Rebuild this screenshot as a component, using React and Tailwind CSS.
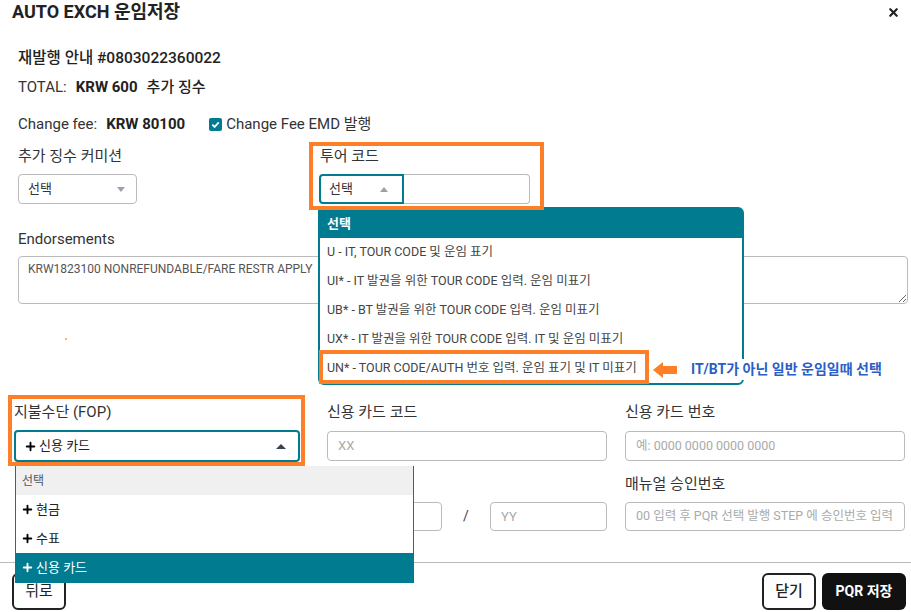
import React from "react";
import { X, Plus } from "lucide-react";

const tourOptions = [
  "U - IT, TOUR CODE 및 운임 표기",
  "UI* - IT 발권을 위한 TOUR CODE 입력. 운임 미표기",
  "UB* - BT 발권을 위한 TOUR CODE 입력. 운임 미표기",
  "UX* - IT 발권을 위한 TOUR CODE 입력. IT 및 운임 미표기",
  "UN* - TOUR CODE/AUTH 번호 입력. 운임 표기 및 IT 미표기",
];

const CaretDown = () => (
  <span className="w-0 h-0 border-x-[4px] border-x-transparent border-t-[5px] border-t-gray-400"></span>
);

const CaretUp = ({ dark }) => (
  <span
    className={
      dark
        ? "w-0 h-0 border-x-[5px] border-x-transparent border-b-[5px] border-b-gray-700"
        : "w-0 h-0 border-x-[4px] border-x-transparent border-b-[5px] border-b-gray-400"
    }
  ></span>
);

const PlusMark = ({ light }) => (
  <Plus size={13} strokeWidth={3.5} className={light ? "text-white" : "text-black"} />
);

export default function App() {
  return (
    <div className="relative w-[911px] h-[612px] overflow-hidden bg-white text-[#333] font-['Roboto','Noto_Sans_CJK_KR',sans-serif]">
      {/* Header */}
      <div className="h-[24px] flex items-center justify-between pl-3 pr-[11px]">
        <h1 className="text-[18px] font-bold text-[#222] leading-6">AUTO EXCH 운임저장</h1>
        <X size={13} strokeWidth={4} className="text-[#222]" />
      </div>

      <div className="pl-[18px] pr-[3px]">
        {/* Summary */}
        <div className="mt-[25px] h-[20px] flex items-center text-[15.5px] font-medium text-[#222]">
          재발행 안내 #0803022360022
        </div>
        <div className="mt-[8px] h-[20px] flex items-center text-[15px]">
          <span>TOTAL:</span>
          <span className="ml-[9px] font-bold text-[#222]">KRW 600</span>
          <span className="ml-[9px] font-medium text-[#222]">추가 징수</span>
        </div>
        <div className="mt-[17px] h-[20px] flex items-center text-[15px]">
          <span>Change fee:</span>
          <span className="ml-[9px] font-bold text-[#222]">KRW 80100</span>
          <span className="ml-[24px] w-[13px] h-[13px] rounded-[2px] bg-[#007b8f] flex items-center justify-center">
            <svg width="9" height="9" viewBox="0 0 10 10">
              <path d="M1.5 5.2 L4 7.6 L8.6 2.6" fill="none" stroke="white" strokeWidth="2" />
            </svg>
          </span>
          <span className="ml-[4px]">Change Fee EMD 발행</span>
        </div>

        {/* Commission / Tour code */}
        <div className="mt-[12px] flex">
          <div className="w-[301px]">
            <div className="h-[20px] flex items-center text-[15px]">추가 징수 커미션</div>
            <div className="mt-[8px] w-[119px] h-[30px] border border-[#bbb] rounded flex items-center justify-between pl-[9px] pr-[11px] text-[13px]">
              <span>선택</span>
              <CaretDown />
            </div>
          </div>
          <div className="relative">
            <div className="h-[20px] flex items-center text-[15px] pl-[1px]">투어 코드</div>
            <div className="mt-[8px] flex">
              <div className="w-[85px] h-[30px] border-2 border-[#007b8f] rounded-l flex items-center justify-between pl-[8px] pr-[14px] text-[13px]">
                <span>선택</span>
                <CaretUp />
              </div>
              <div className="w-[126px] h-[30px] border border-l-0 border-[#bbb] rounded-r"></div>
            </div>

            {/* annotation box */}
            <div className="absolute left-[-10px] top-[-4px] w-[235px] h-[68px] border-[4px] border-[#fd7f27] z-20 pointer-events-none"></div>

            {/* Tour code dropdown */}
            <div className="absolute left-[-1px] top-[61px] w-[426px] border-2 border-[#007b8f] rounded-b-md rounded-tr-md bg-white z-10">
              <div className="h-[29px] bg-[#007b8f] text-white text-[13px] font-bold flex items-center pl-[7px]">선택</div>
              {tourOptions.map((opt) => (
                <div key={opt} className="h-[29px] flex items-center pl-[7px] text-[12.5px] text-[#444]">
                  {opt}
                </div>
              ))}
              <div className="absolute left-[-1px] top-[141px] w-[330px] h-[34px] border-[4px] border-[#fd7f27] pointer-events-none"></div>
              <div className="absolute left-[332px] top-[150px] flex items-center">
                <svg width="26" height="18" viewBox="0 0 26 18">
                  <path d="M1 9 L11 1 L11 5 L25 5 L25 13 L11 13 L11 17 Z" fill="#fd7f27" />
                </svg>
                <span className="ml-[11px] bg-white px-[2px] text-[14px] font-bold text-[#2a5ec7] whitespace-nowrap">
                  IT/BT가 아닌 일반 운임일때 선택
                </span>
              </div>
            </div>
          </div>
        </div>

        {/* Endorsements */}
        <div className="mt-[25px] h-[20px] flex items-center text-[15px]">Endorsements</div>
        <textarea
          className="mt-[7px] block w-full h-[48px] border border-[#bbb] rounded px-[9px] py-[3px] text-[12px] text-[#555] outline-none"
          defaultValue="KRW1823100 NONREFUNDABLE/FARE RESTR APPLY"
        ></textarea>

        <div className="ml-[47px] mt-[34px] w-[2px] h-[2px] bg-[#fd7f27] opacity-60"></div>

        {/* Payment */}
        <div className="mt-[62px] -ml-[4px] flex">
          <div className="relative w-[286px]">
            <div className="h-[20px] flex items-center text-[15px]">지불수단 (FOP)</div>
            <div className="mt-[8px] h-[32px] border-2 border-[#007b8f] rounded flex items-center justify-between pl-[8px] pr-[12px] text-[13px] text-[#222]">
              <span className="flex items-center gap-[2px]">
                <PlusMark />
                신용 카드
              </span>
              <CaretUp dark />
            </div>
            <div className="absolute left-[-6px] top-[-7px] w-[297px] h-[71px] border-[4px] border-[#fd7f27] z-20 pointer-events-none"></div>

            {/* FOP dropdown */}
            <div className="absolute left-[1px] top-[64px] w-[399px] border border-[#007b8f] border-t-0 bg-white z-10 text-[13px]">
              <div className="h-[29px] bg-[#f0f0f0] text-[#555] text-[12px] flex items-center pl-[6px]">선택</div>
              <div className="h-[29px] flex items-center gap-[2px] pl-[5px] text-[#222]">
                <PlusMark />
                현금
              </div>
              <div className="h-[29px] flex items-center gap-[2px] pl-[5px] text-[#222]">
                <PlusMark />
                수표
              </div>
              <div className="h-[29px] flex items-center gap-[2px] pl-[5px] bg-[#007b8f] text-white">
                <PlusMark light />
                신용 카드
              </div>
            </div>

            <div className="mt-[12px] h-[20px]"></div>
          </div>

          <div className="ml-[27px] w-[280px]">
            <div className="h-[20px] flex items-center text-[15px]">신용 카드 코드</div>
            <div className="mt-[9px] h-[30px] border border-[#bbb] rounded flex items-center pl-[10px] text-[13px] text-[#aaa]">XX</div>
            <div className="mt-[13px] h-[20px] flex items-center text-[15px]">유효 기간</div>
            <div className="mt-[8px] flex items-center">
              <div className="w-[115px] h-[29px] border border-[#bbb] rounded flex items-center pl-[10px] text-[13px] text-[#aaa]">MM</div>
              <span className="flex-1 text-center text-[14px] text-[#444]">/</span>
              <div className="w-[117px] h-[29px] border border-[#bbb] rounded flex items-center pl-[10px] text-[13px] text-[#aaa]">YY</div>
            </div>
          </div>

          <div className="ml-[18px] w-[280px]">
            <div className="h-[20px] flex items-center text-[15px]">신용 카드 번호</div>
            <div className="mt-[9px] h-[30px] border border-[#bbb] rounded flex items-center pl-[10px] text-[12.5px] text-[#aaa]">
              예: 0000 0000 0000 0000
            </div>
            <div className="mt-[13px] h-[20px] flex items-center text-[15px]">매뉴얼 승인번호</div>
            <div className="mt-[8px] h-[29px] border border-[#bbb] rounded flex items-center pl-[10px] text-[12.5px] text-[#aaa] whitespace-nowrap overflow-hidden">
              00 입력 후 PQR 선택 발행 STEP 에 승인번호 입력
            </div>
          </div>
        </div>
      </div>

      {/* Footer */}
      <div className="mt-[31px] border-t border-[#bbb] flex items-center justify-between pl-3 pr-[5px] pt-[10px]">
        <button className="w-[54px] h-[37px] border-2 border-[#222] rounded-md bg-white text-[15px] text-[#222]">뒤로</button>
        <div className="flex gap-[6px]">
          <button className="w-[54px] h-[37px] border-2 border-[#222] rounded-md bg-white text-[15px] font-medium text-[#222]">닫기</button>
          <button className="w-[84px] h-[37px] rounded-md bg-[#111] text-[14px] font-bold text-white">PQR 저장</button>
        </div>
      </div>
    </div>
  );
}
